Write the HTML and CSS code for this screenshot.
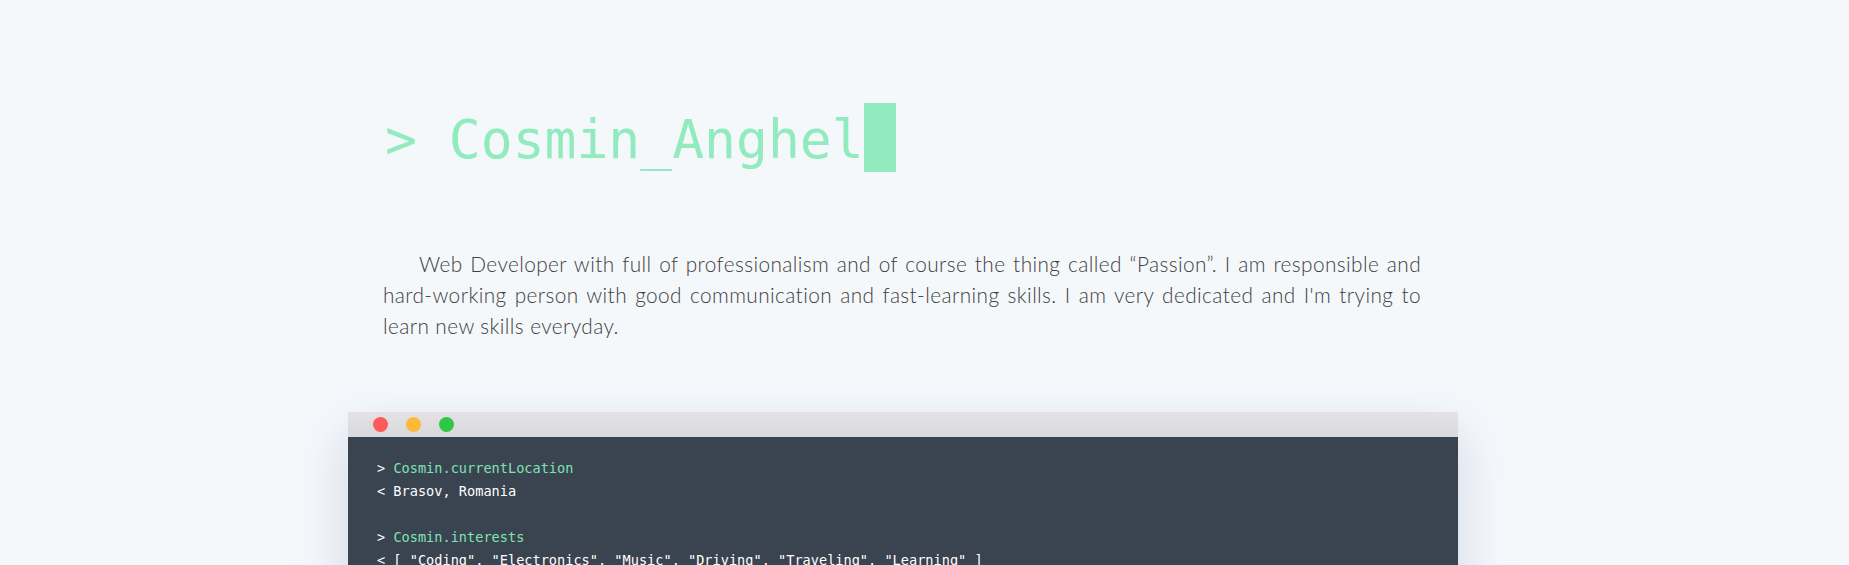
FILE: index.html
```
<!DOCTYPE html>
<html lang="en">
<head>
<meta charset="utf-8">
<title>Cosmin Anghel</title>
<link rel="stylesheet" href="styles.css">
</head>
<body>
<main class="wrap">
  <h1 class="title"><span class="prompt">&gt;</span> Cosmin_Anghel<span class="cursor"></span></h1>
  <p class="about">Web Developer with full of professionalism and of course the thing called “Passion”. I am responsible and hard-working person with good communication and fast-learning skills. I am very dedicated and I'm trying to learn new skills everyday.</p>
  <section class="terminal">
    <div class="bar">
      <span class="dot red"></span>
      <span class="dot yellow"></span>
      <span class="dot green"></span>
    </div>
    <div class="console">
      <div class="line"><span class="sign">&gt;</span> <span class="cmd">Cosmin.currentLocation</span></div>
      <div class="line"><span class="sign">&lt;</span> Brasov, Romania</div>
      <div class="line blank"></div>
      <div class="line"><span class="sign">&gt;</span> <span class="cmd">Cosmin.interests</span></div>
      <div class="line"><span class="sign">&lt;</span> [ "Coding", "Electronics", "Music", "Driving", "Traveling", "Learning" ]</div>
      <div class="line blank"></div>
      <div class="line"><span class="sign">&gt;</span> <span class="cmd">Cosmin.skills</span></div>
    </div>
  </section>
</main>
</body>
</html>
```
FILE: styles.css
```
html, body {
  margin: 0;
  padding: 0;
  background: #f5f8fb;
}

.wrap {
  width: 1110px;
  margin-left: 348px;
  padding-top: 103px;
}

.title {
  margin: 0;
  padding-left: 37px;
  font-family: "DejaVu Sans Mono", monospace;
  font-weight: normal;
  font-size: 53px;
  line-height: 69px;
  height: 69px;
  color: #92ebbf;
  white-space: pre;
}

.cursor {
  display: inline-block;
  width: 32px;
  height: 69px;
  background: #92ebbf;
  vertical-align: -14px;
}

.about {
  margin: 76px 0 0;
  padding: 0 37px 0 35px;
  font-family: "Lato", "Noto Sans", sans-serif;
  font-weight: 300;
  font-size: 20.8px;
  line-height: 31.2px;
  letter-spacing: 0.4px;
  color: #404040;
  text-indent: 36px;
  text-align: justify;
}

.terminal {
  margin-top: 70px;
  box-shadow: 0 20px 50px rgba(120, 130, 170, 0.28);
}

.bar {
  height: 25px;
  background: linear-gradient(#e4e2e4, #d9d8da);
  display: flex;
  align-items: center;
  gap: 18px;
  padding-left: 25px;
}

.dot {
  width: 15px;
  height: 15px;
  border-radius: 50%;
}

.red { background: #fc5b57; }
.yellow { background: #fdb93a; }
.green { background: #2fc748; }

.console {
  background: #3a4350;
  padding: 20px 29px 40px;
  font-family: "DejaVu Sans Mono", monospace;
  font-size: 13.6px;
  line-height: 23px;
  color: #ffffff;
}

.line {
  white-space: pre;
  height: 23px;
}

.cmd {
  color: #7fe3b4;
}
```
